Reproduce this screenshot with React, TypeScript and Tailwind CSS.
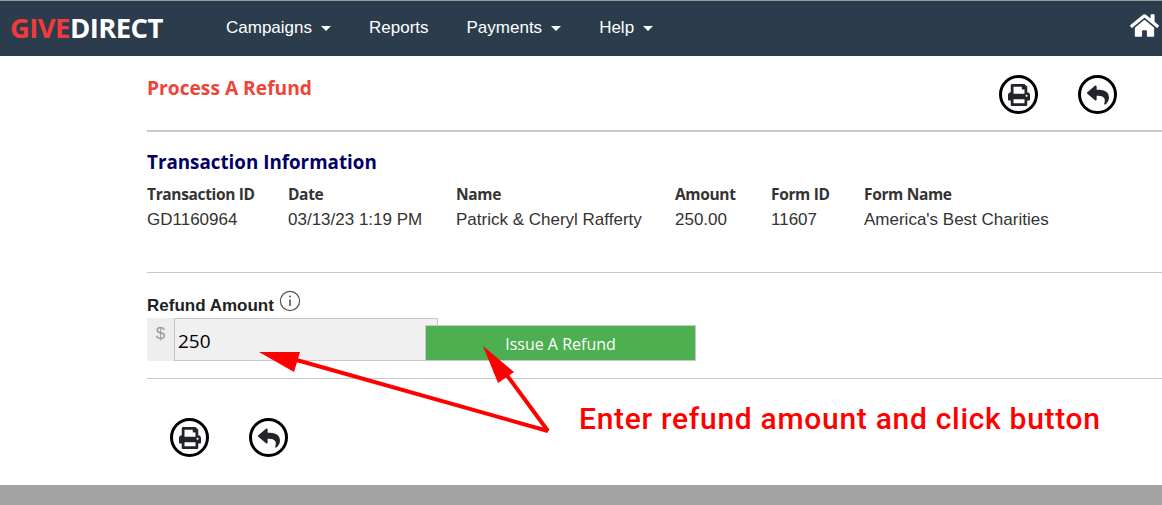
import React from 'react';
import { FaHome, FaPrint, FaReply } from 'react-icons/fa';

const navItems = [
  { label: 'Campaigns', caret: true },
  { label: 'Reports', caret: false },
  { label: 'Payments', caret: true },
  { label: 'Help', caret: true },
];

const columns = [
  { head: 'Transaction ID', value: 'GD1160964' },
  { head: 'Date', value: '03/13/23 1:19 PM' },
  { head: 'Name', value: 'Patrick & Cheryl Rafferty' },
  { head: 'Amount', value: '250.00' },
  { head: 'Form ID', value: '11607' },
  { head: 'Form Name', value: "America's Best Charities" },
];

const CircleIcon: React.FC<{ children: React.ReactNode }> = ({ children }) => (
  <div className="flex h-[39px] w-[39px] items-center justify-center rounded-full border-[3px] border-black bg-white text-[#212529]">
    {children}
  </div>
);

const App: React.FC = () => {
  return (
    <div className="relative flex h-[505px] w-[1162px] flex-col overflow-hidden bg-white font-['Liberation_Sans',sans-serif]">
      <header className="flex h-[56px] items-center border-t border-[#9a9a9a] bg-[#2b3c4c] pb-[2px]">
        <div className="ml-[10px] w-[216px] font-['Open_Sans',sans-serif] text-[27.5px] font-bold tracking-[-0.6px] text-white">
          <span className="text-[#ef3b3b]">GIVE</span>DIRECT
        </div>
        <nav className="flex flex-1 items-center gap-[38px] text-[17px] text-white">
          {navItems.map((item) => (
            <div key={item.label} className="flex items-center">
              {item.label}
              {item.caret && (
                <span className="ml-[9px] mt-[2px] h-0 w-0 border-x-[5px] border-t-[5px] border-x-transparent border-t-white" />
              )}
            </div>
          ))}
        </nav>
        <FaHome className="mr-[3px] mb-[5px] text-[29px] text-white" />
      </header>

      <main className="flex-1 pl-[147px]">
        <div className="flex h-[74px] items-start justify-between">
          <h1 className="mt-[19px] font-['Open_Sans',sans-serif] text-[19.2px] leading-[26px] font-bold text-[#f04438]">
            Process A Refund
          </h1>
          <div className="mt-[19px] mr-[45px] flex gap-[40px]">
            <CircleIcon><FaPrint className="text-[22px]" /></CircleIcon>
            <CircleIcon><FaReply className="text-[22px]" /></CircleIcon>
          </div>
        </div>
        <div className="h-[2px] bg-[#c8c8c8]" />

        <h2 className="mt-[18px] font-['Open_Sans',sans-serif] text-[18.8px] leading-[25px] font-bold text-[#000066]">
          Transaction Information
        </h2>
        <div className="mt-[7px] grid grid-cols-[141px_168px_219px_96px_93px_auto] text-[#333333]">
          {columns.map((col) => (
            <div key={col.head}>
              <div className="font-['Open_Sans',sans-serif] text-[15.5px] leading-[25px] font-bold tracking-[-0.35px]">{col.head}</div>
              <div className="text-[17px] leading-[25px]">{col.value}</div>
            </div>
          ))}
        </div>
        <div className="mt-[40px] h-px bg-[#c8c8c8]" />

        <div className="mt-[16px] flex h-[29px] items-start">
          <span className="mt-[5px] text-[17px] leading-[24px] font-bold text-[#222222]">Refund Amount</span>
          <svg className="mt-[1px] ml-[5px]" width="22" height="22" viewBox="0 0 22 22" fill="none" stroke="#555555">
            <circle cx="11" cy="11" r="9.6" strokeWidth="1.2" />
            <path d="M11 9.5 V16" strokeWidth="1.6" />
            <circle cx="11" cy="6.4" r="1" fill="#555555" stroke="none" />
          </svg>
        </div>
        <div className="flex h-[43px] items-start">
          <div className="flex h-[43px] w-[27px] justify-center bg-[#eeeeee] pt-[6px] text-[17px] leading-[20px] text-[#999999]">$</div>
          <div className="h-[43px] w-[264px] border border-[#c8c8c8] bg-[#f0f0f0] pl-[3px] font-['Open_Sans',sans-serif] text-[19px] leading-[45px] text-black">
            250
          </div>
          <button className="mt-[7px] -ml-[13px] h-[36px] w-[271px] border border-[#c8c8c8] bg-[#4caf50] pt-[2px] font-['Open_Sans',sans-serif] text-[16px] text-white">
            Issue A Refund
          </button>
        </div>
        <div className="mt-[17px] h-px bg-[#c8c8c8]" />

        <div className="mt-[39px] ml-[23px] flex gap-[40px]">
          <CircleIcon><FaPrint className="text-[22px]" /></CircleIcon>
          <CircleIcon><FaReply className="text-[22px]" /></CircleIcon>
        </div>
      </main>

      <div className="h-[20px] bg-[#a3a3a3]" />

      {/* red annotation over the form */}
      <svg className="absolute top-0 left-0" width="1162" height="505" fill="none">
        <path d="M548 431 L293 359" stroke="#ff0000" strokeWidth="4" />
        <path d="M548 431 L506 374" stroke="#ff0000" strokeWidth="4" />
        <polygon points="259,352 300,352 294,372" fill="#ff0000" />
        <polygon points="483,346 514,372 498,383" fill="#ff0000" />
      </svg>
      <div className="absolute top-[400px] left-[579px] font-['Roboto',sans-serif] text-[30px] leading-[38px] font-medium tracking-[0.7px] text-[#ff0000]">
        Enter refund amount and click button
      </div>
    </div>
  );
};

export default App;
